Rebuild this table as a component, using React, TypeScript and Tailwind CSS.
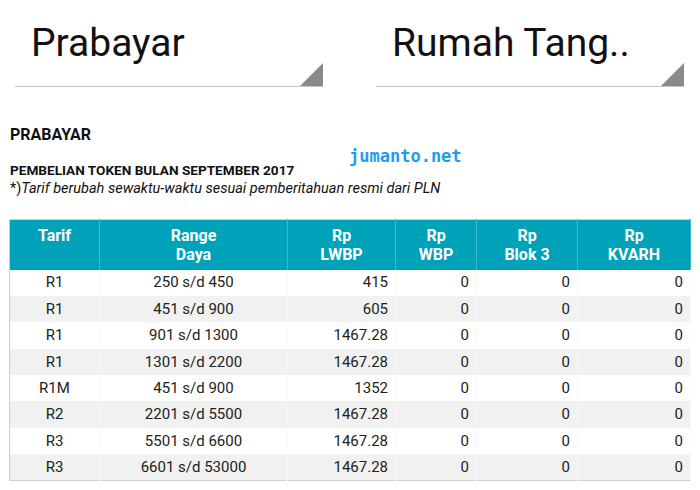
import React from "react";

type Row = {
  tarif: string;
  range: string;
  lwbp: string;
  wbp: string;
  blok3: string;
  kvarh: string;
};

const rows: Row[] = [
  { tarif: "R1", range: "250 s/d 450", lwbp: "415", wbp: "0", blok3: "0", kvarh: "0" },
  { tarif: "R1", range: "451 s/d 900", lwbp: "605", wbp: "0", blok3: "0", kvarh: "0" },
  { tarif: "R1", range: "901 s/d 1300", lwbp: "1467.28", wbp: "0", blok3: "0", kvarh: "0" },
  { tarif: "R1", range: "1301 s/d 2200", lwbp: "1467.28", wbp: "0", blok3: "0", kvarh: "0" },
  { tarif: "R1M", range: "451 s/d 900", lwbp: "1352", wbp: "0", blok3: "0", kvarh: "0" },
  { tarif: "R2", range: "2201 s/d 5500", lwbp: "1467.28", wbp: "0", blok3: "0", kvarh: "0" },
  { tarif: "R3", range: "5501 s/d 6600", lwbp: "1467.28", wbp: "0", blok3: "0", kvarh: "0" },
  { tarif: "R3", range: "6601 s/d 53000", lwbp: "1467.28", wbp: "0", blok3: "0", kvarh: "0" },
];

function Dropdown({ label }: { label: string }) {
  return (
    <div className="flex w-[308px] items-end border-b border-[#c4c4c4]">
      <div className="flex-1 pl-[16px] pt-[19px] pb-[19px] text-[39px] leading-[48px] text-[#111]">
        {label}
      </div>
      <svg width="23" height="23" viewBox="0 0 23 23" className="block">
        <polygon points="23,0 23,23 0,23" fill="#8a8a8a" />
      </svg>
    </div>
  );
}

const th =
  "border-r border-[#3bb8c9] px-1 text-center align-middle text-[16px] font-bold leading-[19px] text-white";
const td = "border-r border-[#f8f8f8] px-[7px] text-[15px] text-[#222]";

export default function App() {
  return (
    <div className="relative h-[490px] w-[700px] overflow-hidden bg-white font-['Roboto',sans-serif]">
      <div className="flex gap-[53px] pl-[15px]">
        <Dropdown label="Prabayar" />
        <Dropdown label="Rumah Tang.." />
      </div>

      <div className="pl-[10px] pt-[38px]">
        <h2 className="text-[16px] font-bold leading-[20px] text-[#111]">PRABAYAR</h2>
        <p className="mt-[16px] text-[13.6px] font-bold leading-[18px] text-[#111]">
          PEMBELIAN TOKEN BULAN SEPTEMBER 2017
        </p>
        <p className="text-[14.5px] leading-[20px] text-[#111]">
          *)<span className="italic">Tarif berubah sewaktu-waktu sesuai pemberitahuan resmi dari PLN</span>
        </p>
      </div>

      <div className="absolute left-[349px] top-[145px] font-['DejaVu_Sans_Mono',monospace] text-[17px] font-bold leading-[22px] text-[#1d9cf0]">
        jumanto.net
      </div>

      <div className="pl-[9px] pt-[20px]">
        <table className="w-[681px] table-fixed border-collapse border border-[#cfcfcf]">
          <colgroup>
            <col className="w-[90px]" />
            <col className="w-[188px]" />
            <col className="w-[108px]" />
            <col className="w-[81px]" />
            <col className="w-[101px]" />
            <col className="w-[113px]" />
          </colgroup>
          <thead>
            <tr className="h-[50px] bg-[#00a2b9]">
              <th className={th}>
                <div className="flex h-[38px] items-start justify-center">Tarif</div>
              </th>
              <th className={th}>
                Range
                <br />
                Daya
              </th>
              <th className={th}>
                Rp
                <br />
                LWBP
              </th>
              <th className={th}>
                Rp
                <br />
                WBP
              </th>
              <th className={th}>
                Rp
                <br />
                Blok 3
              </th>
              <th className={th}>
                Rp
                <br />
                KVARH
              </th>
            </tr>
          </thead>
          <tbody>
            {rows.map((r, i) => (
              <tr key={i} className={i % 2 === 1 ? "h-[26.4px] bg-[#f1f1f1]" : "h-[26.4px] bg-white"}>
                <td className={td + " text-center"}>{r.tarif}</td>
                <td className={td + " text-center"}>{r.range}</td>
                <td className={td + " text-right"}>{r.lwbp}</td>
                <td className={td + " text-right"}>{r.wbp}</td>
                <td className={td + " text-right"}>{r.blok3}</td>
                <td className={td + " text-right"}>{r.kvarh}</td>
              </tr>
            ))}
          </tbody>
        </table>
      </div>
    </div>
  );
}
